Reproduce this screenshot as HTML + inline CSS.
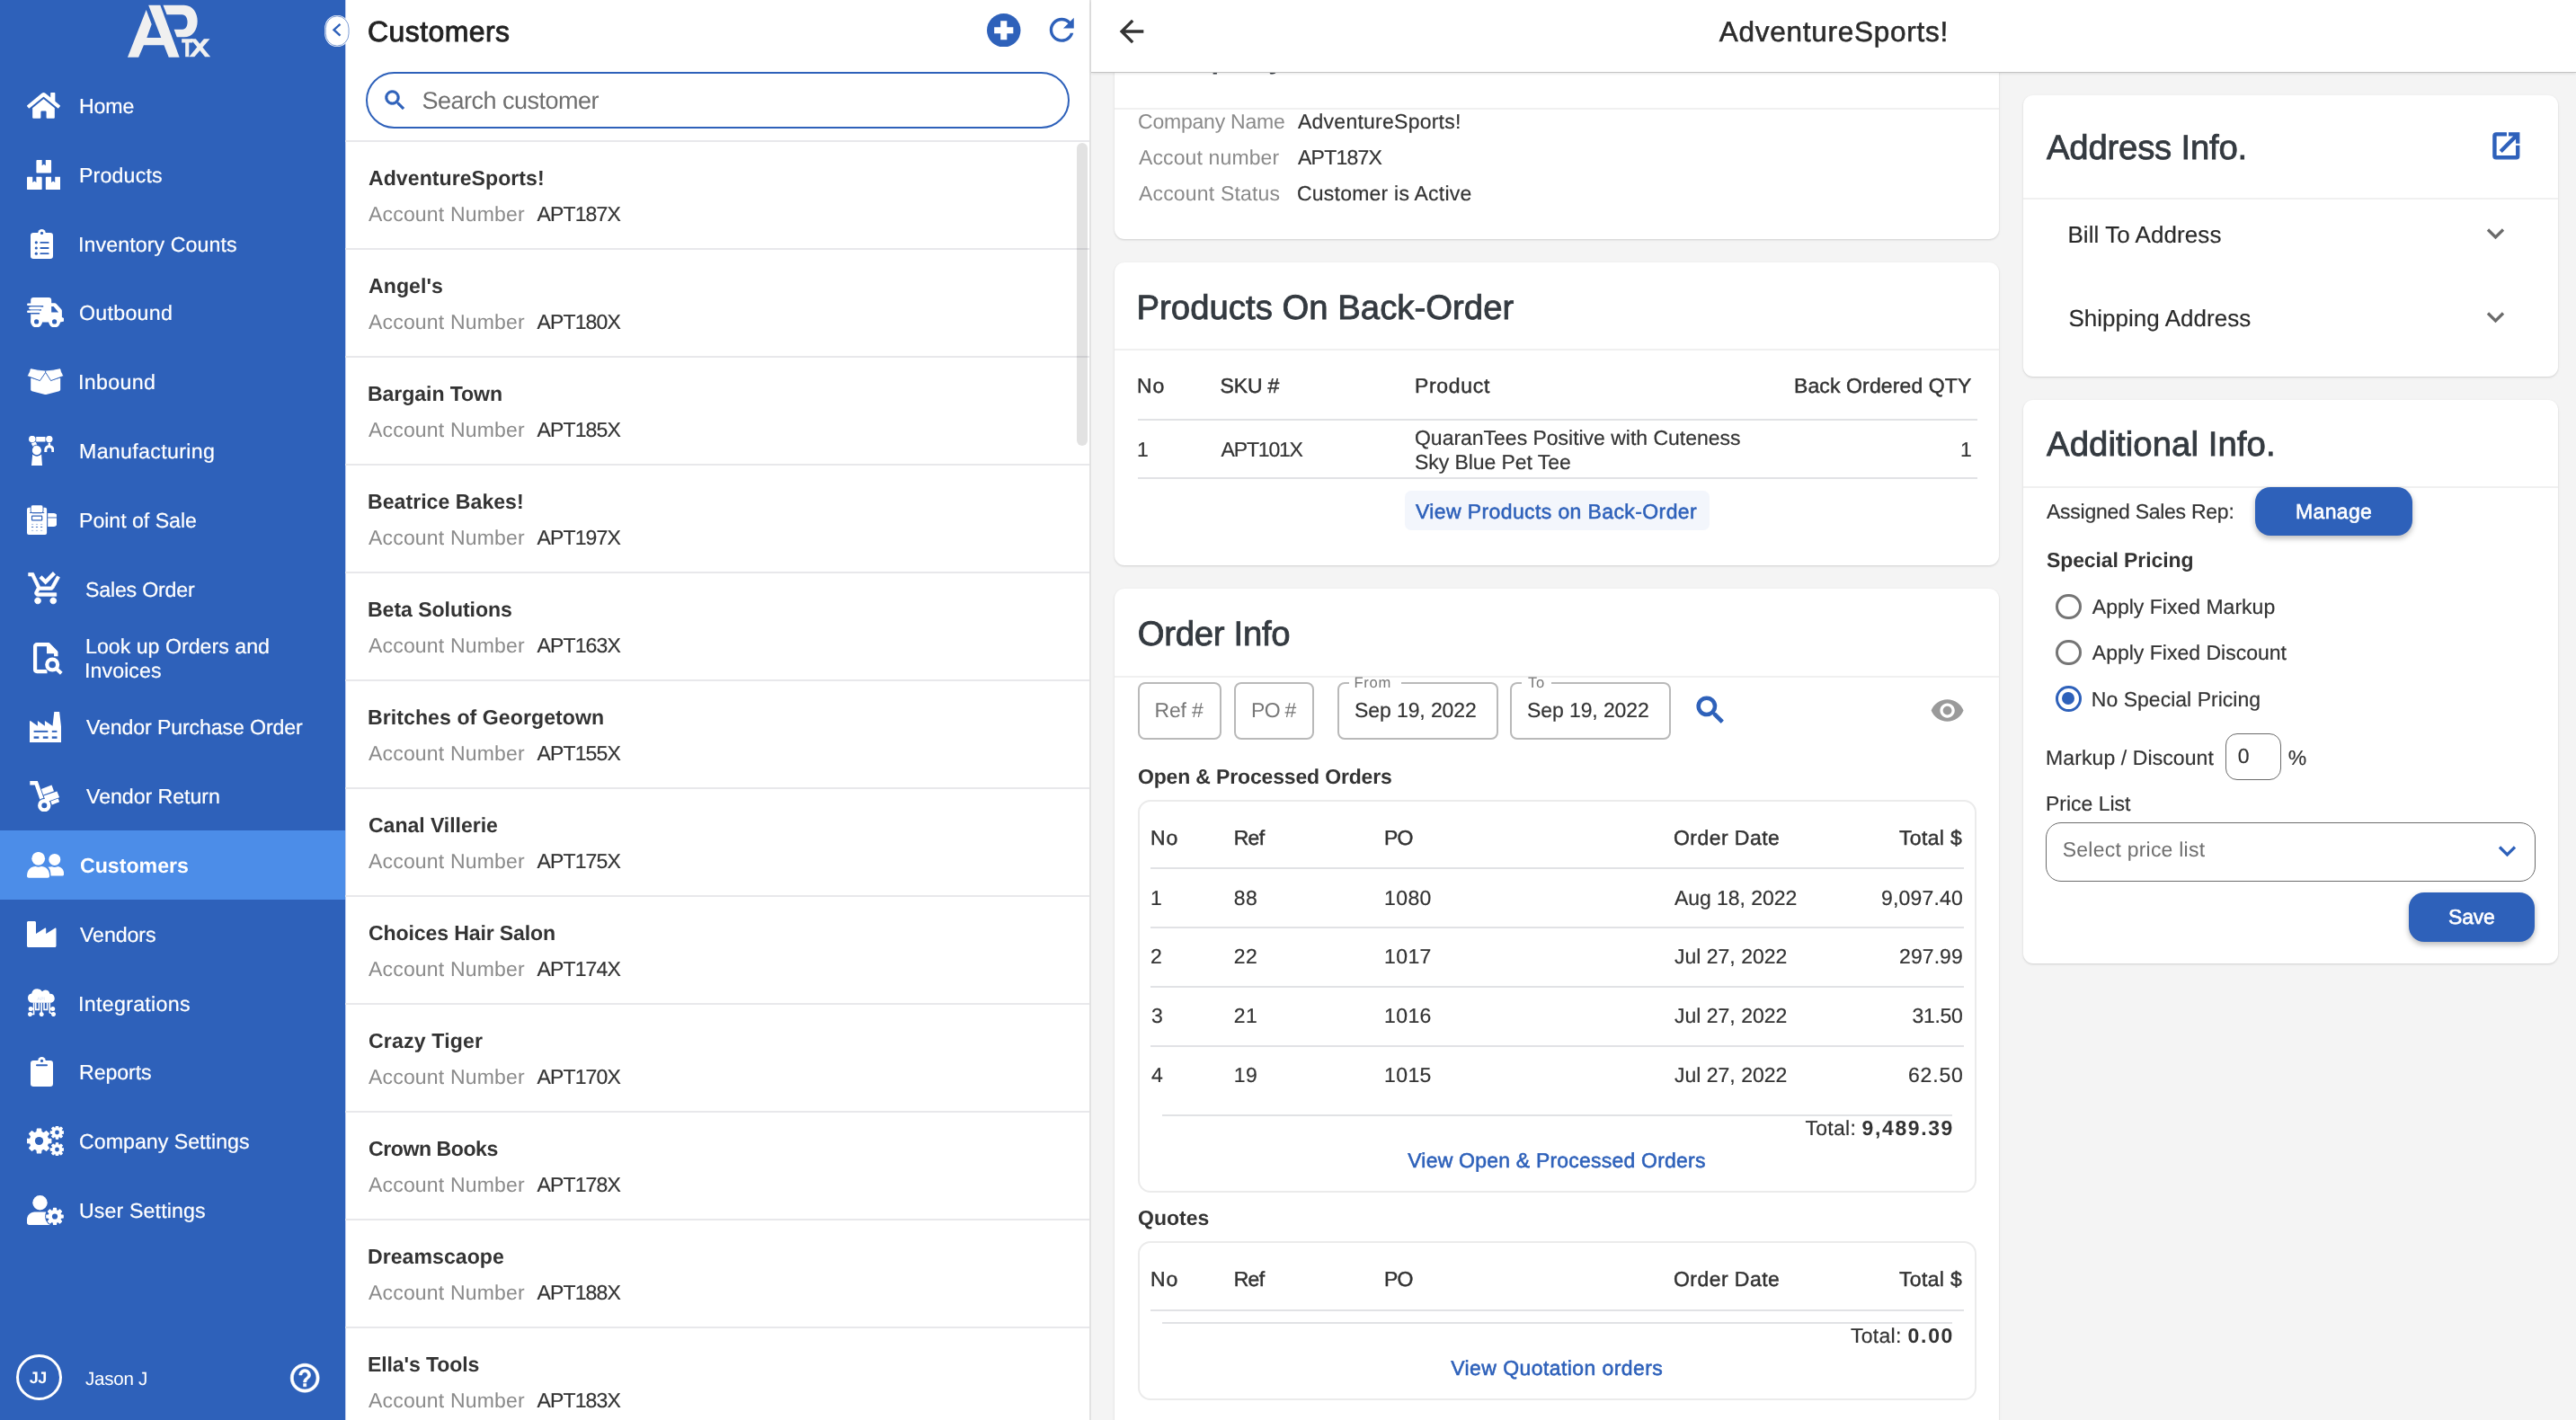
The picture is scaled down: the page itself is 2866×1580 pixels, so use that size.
<!DOCTYPE html>
<html lang="en"><head><meta charset="utf-8"><title>Customers - AdventureSports!</title>
<style>
html,body{margin:0;padding:0;}
body{width:2866px;height:1580px;position:relative;overflow:hidden;background:#fff;
font-family:"Liberation Sans",sans-serif;text-rendering:geometricPrecision;}
.b{position:absolute;box-sizing:border-box;display:block;}
.t{position:absolute;white-space:nowrap;display:block;}
</style></head>
<body>
<div class="b" style="left:0;top:0;width:2866px;height:1580px;will-change:transform;">
<div class="b" style="left:1213.00px;top:0.00px;width:1653.00px;height:1580.00px;background:#f4f4f4;"></div>
<div class="b" style="left:384.00px;top:0.00px;width:829.00px;height:1580.00px;background:#fff;"></div>
<div class="b" style="left:1212.00px;top:0.00px;width:2.00px;height:1580.00px;background:#e2e2e2;"></div>
<div class="b" style="left:384.00px;top:0.00px;width:1.00px;height:1580.00px;background:#c3cfec;"></div>
<div class="b" style="left:1240.00px;top:20.00px;width:984.00px;height:245.50px;background:#fff;border-radius:11px;box-shadow:0 1px 3px rgba(0,0,0,0.10),0 1px 2px rgba(0,0,0,0.06);"></div>
<span class="t" style="top:43.00px;font-size:38.30px;line-height:38.30px;color:#343a40;letter-spacing:0.215px;-webkit-text-stroke:0.85px #343a40;left:1266.00px;">Company Info.</span>
<div class="b" style="left:1240.00px;top:120.00px;width:984.00px;height:2.00px;background:#f0f0f0;"></div>
<span class="t" style="top:124.00px;font-size:23.00px;line-height:23.00px;color:#8a8a8a;letter-spacing:-0.218px;left:1266.00px;">Company Name</span>
<span class="t" style="top:124.00px;font-size:23.00px;line-height:23.00px;color:#333;letter-spacing:0.245px;-webkit-text-stroke:0.18px #333;left:1444.00px;">AdventureSports!</span>
<span class="t" style="top:164.00px;font-size:23.00px;line-height:23.00px;color:#8a8a8a;letter-spacing:0.121px;left:1267.00px;">Accout number</span>
<span class="t" style="top:164.00px;font-size:23.00px;line-height:23.00px;color:#333;letter-spacing:-0.769px;-webkit-text-stroke:0.18px #333;left:1444.00px;">APT187X</span>
<span class="t" style="top:204.00px;font-size:23.00px;line-height:23.00px;color:#8a8a8a;letter-spacing:0.177px;left:1267.00px;">Account Status</span>
<span class="t" style="top:204.00px;font-size:23.00px;line-height:23.00px;color:#333;letter-spacing:0.226px;-webkit-text-stroke:0.18px #333;left:1443.00px;">Customer is Active</span>
<div class="b" style="left:1240.00px;top:291.50px;width:984.00px;height:337.00px;background:#fff;border-radius:11px;box-shadow:0 1px 3px rgba(0,0,0,0.10),0 1px 2px rgba(0,0,0,0.06);"></div>
<span class="t" style="top:324.00px;font-size:38.30px;line-height:38.30px;color:#343a40;letter-spacing:0.022px;-webkit-text-stroke:0.85px #343a40;left:1264.50px;">Products On Back-Order</span>
<div class="b" style="left:1240.00px;top:387.50px;width:984.00px;height:2.00px;background:#f0f0f0;"></div>
<span class="t" style="top:418.00px;font-size:23.00px;line-height:23.00px;color:#333;letter-spacing:0.885px;-webkit-text-stroke:0.45px #333;left:1265.00px;">No</span>
<span class="t" style="top:418.00px;font-size:23.00px;line-height:23.00px;color:#333;letter-spacing:-0.173px;-webkit-text-stroke:0.45px #333;left:1357.60px;">SKU #</span>
<span class="t" style="top:418.00px;font-size:23.00px;line-height:23.00px;color:#333;letter-spacing:0.687px;-webkit-text-stroke:0.45px #333;left:1574.00px;">Product</span>
<span class="t" style="top:418.00px;font-size:23.00px;line-height:23.00px;color:#333;letter-spacing:0.118px;-webkit-text-stroke:0.45px #333;right:672.54px;">Back Ordered QTY</span>
<div class="b" style="left:1266.00px;top:465.50px;width:934.00px;height:2.00px;background:#e1e2e5;"></div>
<span class="t" style="top:489.00px;font-size:23.00px;line-height:23.00px;color:#333;-webkit-text-stroke:0.18px #333;left:1265.00px;">1</span>
<span class="t" style="top:489.00px;font-size:23.00px;line-height:23.00px;color:#333;letter-spacing:-1.185px;-webkit-text-stroke:0.18px #333;left:1358.60px;">APT101X</span>
<span class="t" style="top:476.00px;font-size:23.00px;line-height:23.00px;color:#333;letter-spacing:-0.018px;-webkit-text-stroke:0.18px #333;left:1574.00px;">QuaranTees Positive with Cuteness</span>
<span class="t" style="top:503.00px;font-size:23.00px;line-height:23.00px;color:#333;letter-spacing:-0.064px;-webkit-text-stroke:0.18px #333;left:1574.00px;">Sky Blue Pet Tee</span>
<span class="t" style="top:489.00px;font-size:23.00px;line-height:23.00px;color:#333;-webkit-text-stroke:0.18px #333;right:672.21px;">1</span>
<div class="b" style="left:1266.00px;top:531.00px;width:934.00px;height:2.00px;background:#e1e2e5;"></div>
<div class="b" style="left:1562.50px;top:546.00px;width:339.50px;height:43.70px;background:#f3f6fc;border-radius:7px;"></div>
<span class="t" style="top:558.00px;font-size:23.00px;line-height:23.00px;color:#2e61ba;letter-spacing:0.389px;-webkit-text-stroke:0.55px #2e61ba;left:1575.00px;">View Products on Back-Order</span>
<div class="b" style="left:1240.00px;top:654.50px;width:984.00px;height:1000.00px;background:#fff;border-radius:11px;box-shadow:0 1px 3px rgba(0,0,0,0.10),0 1px 2px rgba(0,0,0,0.06);"></div>
<span class="t" style="top:687.00px;font-size:38.30px;line-height:38.30px;color:#343a40;letter-spacing:-0.291px;-webkit-text-stroke:0.85px #343a40;left:1265.80px;">Order Info</span>
<div class="b" style="left:1240.00px;top:751.50px;width:984.00px;height:2.00px;background:#f0f0f0;"></div>
<div class="b" style="left:1266.00px;top:759.00px;width:93.30px;height:64.30px;border:2px solid #b9b9b9;border-radius:8px;background:#fff;"></div>
<span class="t" style="top:779.00px;font-size:23.00px;line-height:23.00px;color:#777;letter-spacing:-0.173px;left:1284.50px;">Ref #</span>
<div class="b" style="left:1373.00px;top:759.00px;width:88.80px;height:64.30px;border:2px solid #b9b9b9;border-radius:8px;background:#fff;"></div>
<span class="t" style="top:779.00px;font-size:23.00px;line-height:23.00px;color:#777;letter-spacing:-0.710px;left:1392.00px;">PO #</span>
<div class="b" style="left:1488.00px;top:759.00px;width:178.80px;height:64.30px;border:2px solid #b9b9b9;border-radius:8px;background:#fff;"></div>
<div class="b" style="left:1680.00px;top:759.00px;width:178.80px;height:64.30px;border:2px solid #b9b9b9;border-radius:8px;background:#fff;"></div>
<div class="b" style="left:1501.00px;top:756.00px;width:58.00px;height:8.00px;background:#fff;"></div>
<span class="t" style="top:752.00px;font-size:16.60px;line-height:16.60px;color:#777;letter-spacing:0.701px;left:1506.50px;">From</span>
<div class="b" style="left:1693.00px;top:756.00px;width:33.00px;height:8.00px;background:#fff;"></div>
<span class="t" style="top:752.00px;font-size:16.60px;line-height:16.60px;color:#777;letter-spacing:0.697px;left:1700.00px;">To</span>
<span class="t" style="top:779.00px;font-size:23.00px;line-height:23.00px;color:#333;letter-spacing:-0.096px;-webkit-text-stroke:0.18px #333;left:1507.00px;">Sep 19, 2022</span>
<span class="t" style="top:779.00px;font-size:23.00px;line-height:23.00px;color:#333;letter-spacing:-0.096px;-webkit-text-stroke:0.18px #333;left:1699.00px;">Sep 19, 2022</span>
<svg class="b" style="left:1882.50px;top:770.00px;" width="40.00" height="40.00" viewBox="0 0 24 24"><path fill="#2e61ba" stroke="#2e61ba" stroke-width="0.7" stroke-linejoin="round" d="M15.500 14h-.790l-.280-.270C15.410 12.590 16 11.110 16 9.500 16 5.910 13.090 3 9.500 3S3 5.910 3 9.500 5.910 16 9.500 16c1.610 0 3.090-.590 4.230-1.570l.270.280v.790l5 4.990L20.490 19l-4.990-5zm-6 0C7.010 14 5 11.990 5 9.500S7.010 5 9.500 5 14 7.010 14 9.500 11.990 14 9.500 14z"/></svg>
<svg class="b" style="left:2147.40px;top:770.60px;" width="39.20" height="39.20" viewBox="0 0 24 24"><path fill="#9a9a9a" d="M12 4.500C7 4.500 2.730 7.610 1 12c1.730 4.390 6 7.500 11 7.500s9.270-3.110 11-7.500c-1.730-4.390-6-7.500-11-7.500zM12 17c-2.760 0-5-2.240-5-5s2.240-5 5-5 5 2.240 5 5-2.240 5-5 5zm0-8c-1.660 0-3 1.340-3 3s1.340 3 3 3 3-1.340 3-3-1.340-3-3-3z"/></svg>
<span class="t" style="top:853.00px;font-size:23.00px;line-height:23.00px;color:#333;font-weight:700;letter-spacing:-0.161px;left:1266.00px;">Open &amp; Processed Orders</span>
<div class="b" style="left:1266.00px;top:889.50px;width:933.00px;height:437.80px;border:2px solid #ebebeb;border-radius:14px;background:#fff;"></div>
<span class="t" style="top:921.00px;font-size:23.00px;line-height:23.00px;color:#333;letter-spacing:0.885px;-webkit-text-stroke:0.45px #333;left:1280.00px;">No</span>
<span class="t" style="top:921.00px;font-size:23.00px;line-height:23.00px;color:#333;letter-spacing:-0.703px;-webkit-text-stroke:0.45px #333;left:1372.70px;">Ref</span>
<span class="t" style="top:921.00px;font-size:23.00px;line-height:23.00px;color:#333;letter-spacing:-0.844px;-webkit-text-stroke:0.45px #333;left:1540.00px;">PO</span>
<span class="t" style="top:921.00px;font-size:23.00px;line-height:23.00px;color:#333;letter-spacing:0.447px;-webkit-text-stroke:0.45px #333;left:1862.00px;">Order Date</span>
<span class="t" style="top:921.00px;font-size:23.00px;line-height:23.00px;color:#333;letter-spacing:0.338px;-webkit-text-stroke:0.45px #333;right:682.87px;">Total $</span>
<div class="b" style="left:1280.00px;top:965.20px;width:905.00px;height:2.00px;background:#e1e2e5;"></div>
<span class="t" style="top:988.00px;font-size:23.00px;line-height:23.00px;color:#333;-webkit-text-stroke:0.18px #333;left:1280.00px;">1</span>
<span class="t" style="top:988.00px;font-size:23.00px;line-height:23.00px;color:#333;letter-spacing:0.500px;-webkit-text-stroke:0.18px #333;left:1372.70px;">88</span>
<span class="t" style="top:988.00px;font-size:23.00px;line-height:23.00px;color:#333;letter-spacing:0.400px;-webkit-text-stroke:0.18px #333;left:1540.00px;">1080</span>
<span class="t" style="top:988.00px;font-size:23.00px;line-height:23.00px;color:#333;letter-spacing:-0.050px;-webkit-text-stroke:0.18px #333;left:1863.00px;">Aug 18, 2022</span>
<span class="t" style="top:988.00px;font-size:23.00px;line-height:23.00px;color:#333;letter-spacing:0.180px;-webkit-text-stroke:0.18px #333;right:682.03px;">9,097.40</span>
<div class="b" style="left:1280.00px;top:1031.00px;width:905.00px;height:2.00px;background:#e1e2e5;"></div>
<span class="t" style="top:1053.00px;font-size:23.00px;line-height:23.00px;color:#333;-webkit-text-stroke:0.18px #333;left:1280.00px;">2</span>
<span class="t" style="top:1053.00px;font-size:23.00px;line-height:23.00px;color:#333;letter-spacing:0.500px;-webkit-text-stroke:0.18px #333;left:1372.70px;">22</span>
<span class="t" style="top:1053.00px;font-size:23.00px;line-height:23.00px;color:#333;letter-spacing:0.400px;-webkit-text-stroke:0.18px #333;left:1540.00px;">1017</span>
<span class="t" style="top:1053.00px;font-size:23.00px;line-height:23.00px;color:#333;-webkit-text-stroke:0.18px #333;left:1863.00px;">Jul 27, 2022</span>
<span class="t" style="top:1053.00px;font-size:23.00px;line-height:23.00px;color:#333;letter-spacing:0.086px;-webkit-text-stroke:0.18px #333;right:682.12px;">297.99</span>
<div class="b" style="left:1280.00px;top:1096.80px;width:905.00px;height:2.00px;background:#e1e2e5;"></div>
<span class="t" style="top:1119.00px;font-size:23.00px;line-height:23.00px;color:#333;-webkit-text-stroke:0.18px #333;left:1281.00px;">3</span>
<span class="t" style="top:1119.00px;font-size:23.00px;line-height:23.00px;color:#333;letter-spacing:0.500px;-webkit-text-stroke:0.18px #333;left:1372.70px;">21</span>
<span class="t" style="top:1119.00px;font-size:23.00px;line-height:23.00px;color:#333;letter-spacing:0.400px;-webkit-text-stroke:0.18px #333;left:1540.00px;">1016</span>
<span class="t" style="top:1119.00px;font-size:23.00px;line-height:23.00px;color:#333;-webkit-text-stroke:0.18px #333;left:1863.00px;">Jul 27, 2022</span>
<span class="t" style="top:1119.00px;font-size:23.00px;line-height:23.00px;color:#333;letter-spacing:-0.318px;-webkit-text-stroke:0.18px #333;right:682.53px;">31.50</span>
<div class="b" style="left:1280.00px;top:1162.60px;width:905.00px;height:2.00px;background:#e1e2e5;"></div>
<span class="t" style="top:1185.00px;font-size:23.00px;line-height:23.00px;color:#333;-webkit-text-stroke:0.18px #333;left:1281.00px;">4</span>
<span class="t" style="top:1185.00px;font-size:23.00px;line-height:23.00px;color:#333;letter-spacing:0.500px;-webkit-text-stroke:0.18px #333;left:1372.70px;">19</span>
<span class="t" style="top:1185.00px;font-size:23.00px;line-height:23.00px;color:#333;letter-spacing:0.400px;-webkit-text-stroke:0.18px #333;left:1540.00px;">1015</span>
<span class="t" style="top:1185.00px;font-size:23.00px;line-height:23.00px;color:#333;-webkit-text-stroke:0.18px #333;left:1863.00px;">Jul 27, 2022</span>
<span class="t" style="top:1185.00px;font-size:23.00px;line-height:23.00px;color:#333;letter-spacing:0.807px;-webkit-text-stroke:0.18px #333;right:681.40px;">62.50</span>
<div class="b" style="left:1293.00px;top:1240.00px;width:879.00px;height:2.00px;background:#e1e2e5;"></div>
<span class="t" style="top:1244.00px;font-size:23.00px;line-height:23.00px;color:#333;letter-spacing:0.281px;-webkit-text-stroke:0.18px #333;right:800.83px;">Total:</span>
<span class="t" style="top:1244.00px;font-size:23.00px;line-height:23.00px;color:#333;font-weight:700;letter-spacing:1.609px;right:692.00px;">9,489.39</span>
<span class="t" style="top:1280.00px;font-size:23.00px;line-height:23.00px;color:#2e61ba;letter-spacing:0.209px;-webkit-text-stroke:0.55px #2e61ba;left:1731.90px;width:0;display:flex;justify-content:center;">View Open &amp; Processed Orders</span>
<span class="t" style="top:1344.00px;font-size:23.00px;line-height:23.00px;color:#333;font-weight:700;letter-spacing:0.011px;left:1266.00px;">Quotes</span>
<div class="b" style="left:1266.00px;top:1381.20px;width:933.00px;height:176.50px;border:2px solid #ebebeb;border-radius:14px;background:#fff;"></div>
<span class="t" style="top:1412.00px;font-size:23.00px;line-height:23.00px;color:#333;letter-spacing:0.885px;-webkit-text-stroke:0.45px #333;left:1280.00px;">No</span>
<span class="t" style="top:1412.00px;font-size:23.00px;line-height:23.00px;color:#333;letter-spacing:-0.703px;-webkit-text-stroke:0.45px #333;left:1372.70px;">Ref</span>
<span class="t" style="top:1412.00px;font-size:23.00px;line-height:23.00px;color:#333;letter-spacing:-0.844px;-webkit-text-stroke:0.45px #333;left:1540.00px;">PO</span>
<span class="t" style="top:1412.00px;font-size:23.00px;line-height:23.00px;color:#333;letter-spacing:0.447px;-webkit-text-stroke:0.45px #333;left:1862.00px;">Order Date</span>
<span class="t" style="top:1412.00px;font-size:23.00px;line-height:23.00px;color:#333;letter-spacing:0.338px;-webkit-text-stroke:0.45px #333;right:682.87px;">Total $</span>
<div class="b" style="left:1280.00px;top:1456.50px;width:905.00px;height:2.00px;background:#e1e2e5;"></div>
<div class="b" style="left:1293.00px;top:1470.50px;width:879.00px;height:2.00px;background:#e1e2e5;"></div>
<span class="t" style="top:1475.00px;font-size:23.00px;line-height:23.00px;color:#333;letter-spacing:0.281px;-webkit-text-stroke:0.18px #333;right:750.33px;">Total:</span>
<span class="t" style="top:1475.00px;font-size:23.00px;line-height:23.00px;color:#333;font-weight:700;letter-spacing:1.675px;right:691.93px;">0.00</span>
<span class="t" style="top:1511.00px;font-size:23.00px;line-height:23.00px;color:#2e61ba;letter-spacing:0.417px;-webkit-text-stroke:0.55px #2e61ba;left:1732.21px;width:0;display:flex;justify-content:center;">View Quotation orders</span>
<div class="b" style="left:2251.00px;top:105.50px;width:595.00px;height:313.00px;background:#fff;border-radius:11px;box-shadow:0 1px 3px rgba(0,0,0,0.10),0 1px 2px rgba(0,0,0,0.06);"></div>
<span class="t" style="top:146.00px;font-size:38.30px;line-height:38.30px;color:#343a40;letter-spacing:-0.210px;-webkit-text-stroke:0.85px #343a40;left:2277.00px;">Address Info.</span>
<svg class="b" style="left:2769.20px;top:143.20px;" width="38.70" height="38.70" viewBox="0 0 24 24"><path fill="#2e61ba" stroke="#2f60bb" stroke-width="0.7" d="M19 19H5V5h7V3H5c-1.110 0-2 .900-2 2v14c0 1.100.890 2 2 2h14c1.100 0 2-.900 2-2v-7h-2v7zM14 3v2h3.590l-9.830 9.830 1.410 1.410L19 6.410V10h2V3h-7z"/></svg>
<div class="b" style="left:2251.00px;top:219.50px;width:595.00px;height:2.00px;background:#f0f0f0;"></div>
<span class="t" style="top:248.00px;font-size:26.00px;line-height:26.00px;color:#2a2a2a;letter-spacing:0.067px;-webkit-text-stroke:0.18px #2a2a2a;left:2300.40px;">Bill To Address</span>
<span class="t" style="top:341.00px;font-size:26.00px;line-height:26.00px;color:#2a2a2a;letter-spacing:0.028px;-webkit-text-stroke:0.18px #2a2a2a;left:2301.40px;">Shipping Address</span>
<svg class="b" style="left:2765.50px;top:252.50px;" width="21.00" height="14.00" viewBox="0 0 21 14"><path d="M2 2.500l8.500 8.500 8.500-8.500" fill="none" stroke="#6b6b6b" stroke-width="3.300"/></svg>
<svg class="b" style="left:2765.50px;top:345.50px;" width="21.00" height="14.00" viewBox="0 0 21 14"><path d="M2 2.500l8.500 8.500 8.500-8.500" fill="none" stroke="#6b6b6b" stroke-width="3.300"/></svg>
<div class="b" style="left:2251.00px;top:444.70px;width:595.00px;height:627.50px;background:#fff;border-radius:11px;box-shadow:0 1px 3px rgba(0,0,0,0.10),0 1px 2px rgba(0,0,0,0.06);"></div>
<span class="t" style="top:476.00px;font-size:38.30px;line-height:38.30px;color:#343a40;letter-spacing:0.084px;-webkit-text-stroke:0.85px #343a40;left:2277.00px;">Additional Info.</span>
<div class="b" style="left:2251.00px;top:540.50px;width:595.00px;height:2.00px;background:#f0f0f0;"></div>
<span class="t" style="top:558.00px;font-size:23.00px;line-height:23.00px;color:#333;letter-spacing:-0.263px;-webkit-text-stroke:0.18px #333;left:2277.00px;">Assigned Sales Rep:</span>
<div class="b" style="left:2509.00px;top:542.40px;width:175.30px;height:53.60px;background:#2e61ba;border-radius:17px;box-shadow:0 3px 6px rgba(0,0,0,0.28);"></div>
<span class="t" style="top:558.00px;font-size:23.00px;line-height:23.00px;color:#fff;letter-spacing:0.333px;-webkit-text-stroke:0.60px #fff;left:2596.67px;width:0;display:flex;justify-content:center;">Manage</span>
<span class="t" style="top:612.00px;font-size:23.00px;line-height:23.00px;color:#333;font-weight:700;letter-spacing:-0.104px;left:2277.00px;">Special Pricing</span>
<div class="b" style="left:2287.00px;top:660.60px;width:28.80px;height:28.80px;border:3px solid #757575;border-radius:50%;background:#fff;"></div>
<span class="t" style="top:664.00px;font-size:23.00px;line-height:23.00px;color:#333;letter-spacing:0.008px;-webkit-text-stroke:0.18px #333;left:2327.80px;">Apply Fixed Markup</span>
<div class="b" style="left:2287.00px;top:711.70px;width:28.80px;height:28.80px;border:3px solid #757575;border-radius:50%;background:#fff;"></div>
<span class="t" style="top:715.00px;font-size:23.00px;line-height:23.00px;color:#333;letter-spacing:0.008px;-webkit-text-stroke:0.18px #333;left:2327.80px;">Apply Fixed Discount</span>
<div class="b" style="left:2287.00px;top:762.80px;width:28.80px;height:28.80px;border:3px solid #2e61ba;border-radius:50%;background:#fff;"></div>
<div class="b" style="left:2294.40px;top:770.20px;width:14.00px;height:14.00px;background:#2e61ba;border-radius:50%;"></div>
<span class="t" style="top:767.00px;font-size:23.00px;line-height:23.00px;color:#333;letter-spacing:0.022px;-webkit-text-stroke:0.18px #333;left:2326.80px;">No Special Pricing</span>
<span class="t" style="top:832.00px;font-size:23.00px;line-height:23.00px;color:#333;letter-spacing:0.096px;-webkit-text-stroke:0.18px #333;left:2276.00px;">Markup / Discount</span>
<div class="b" style="left:2476.00px;top:816.00px;width:62.00px;height:52.00px;border:1.600px solid #6b6b6b;border-radius:13px;background:#fff;"></div>
<span class="t" style="top:830.00px;font-size:23.00px;line-height:23.00px;color:#333;-webkit-text-stroke:0.18px #333;left:2489.70px;">0</span>
<span class="t" style="top:832.00px;font-size:23.00px;line-height:23.00px;color:#333;letter-spacing:-1.002px;-webkit-text-stroke:0.18px #333;left:2545.70px;">%</span>
<span class="t" style="top:883.00px;font-size:23.00px;line-height:23.00px;color:#333;letter-spacing:-0.023px;-webkit-text-stroke:0.18px #333;left:2276.00px;">Price List</span>
<div class="b" style="left:2276.00px;top:915.00px;width:545.00px;height:65.50px;border:1.600px solid #6b6b6b;border-radius:17px;background:#fff;"></div>
<span class="t" style="top:934.00px;font-size:23.00px;line-height:23.00px;color:#6f6f6f;letter-spacing:0.232px;left:2294.70px;">Select price list</span>
<svg class="b" style="left:2778.50px;top:940.00px;" width="21.00" height="14.00" viewBox="0 0 21 14"><path d="M2 2.500l8.500 8.500 8.500-8.500" fill="none" stroke="#2e61ba" stroke-width="3.300"/></svg>
<div class="b" style="left:2680.00px;top:993.00px;width:140.00px;height:54.70px;background:#2e61ba;border-radius:17px;box-shadow:0 3px 6px rgba(0,0,0,0.28);"></div>
<span class="t" style="top:1009.00px;font-size:23.00px;line-height:23.00px;color:#fff;letter-spacing:-0.215px;-webkit-text-stroke:0.60px #fff;left:2749.89px;width:0;display:flex;justify-content:center;">Save</span>
<div class="b" style="left:1214.00px;top:0.00px;width:1652.00px;height:80.00px;background:#fff;box-shadow:0 1px 0 #c4c4c4, 0 2px 3px rgba(0,0,0,0.10);"></div>
<svg class="b" style="left:1239.00px;top:14.70px;" width="40.00" height="40.00" viewBox="0 0 24 24"><path fill="#333" d="M20 11H7.830l5.590-5.590L12 4l-8 8 8 8 1.410-1.410L7.830 13H20v-2z"/></svg>
<span class="t" style="top:20.00px;font-size:31.50px;line-height:31.50px;color:#2b2b2b;letter-spacing:0.757px;-webkit-text-stroke:0.55px #2b2b2b;left:2040.38px;width:0;display:flex;justify-content:center;">AdventureSports!</span>
<span class="t" style="top:19.00px;font-size:32.00px;line-height:32.00px;color:#222;letter-spacing:0.412px;-webkit-text-stroke:0.90px #222;left:409.00px;">Customers</span>
<svg class="b" style="left:1098.00px;top:14.50px;" width="37.50" height="37.50" viewBox="0 0 40 40"><circle cx="20" cy="20" r="20" fill="#2e61ba"/><path d="M20 8.700v22.600M8.700 20h22.600" stroke="#fff" stroke-width="7.600" stroke-linecap="butt"/></svg>
<svg class="b" style="left:1160.50px;top:13.30px;" width="40.50" height="40.50" viewBox="0 0 24 24"><path fill="#2e61ba" d="M17.650 6.350C16.200 4.900 14.210 4 12 4c-4.420 0-7.990 3.580-7.990 8s3.570 8 7.990 8c3.730 0 6.840-2.550 7.730-6h-2.080c-.820 2.330-3.040 4-5.650 4-3.310 0-6-2.690-6-6s2.690-6 6-6c1.660 0 3.140.690 4.220 1.780L13 11h7V4l-2.350 2.350z"/></svg>
<div class="b" style="left:406.60px;top:80.00px;width:783.60px;height:63.20px;border:2.5px solid #2e61ba;border-radius:32px;background:#fff;"></div>
<svg class="b" style="left:424.50px;top:96.50px;" width="29.00" height="29.00" viewBox="0 0 24 24"><path fill="#2e61ba" stroke="#2e61ba" stroke-width="0.6" stroke-linejoin="round" d="M15.500 14h-.790l-.280-.270C15.410 12.590 16 11.110 16 9.500 16 5.910 13.090 3 9.500 3S3 5.910 3 9.500 5.910 16 9.500 16c1.610 0 3.090-.590 4.230-1.570l.270.280v.790l5 4.990L20.490 19l-4.990-5zm-6 0C7.010 14 5 11.990 5 9.500S7.010 5 9.500 5 14 7.010 14 9.500 11.990 14 9.500 14z"/></svg>
<span class="t" style="top:99.00px;font-size:27.00px;line-height:27.00px;color:#6f6f6f;letter-spacing:-0.507px;left:469.50px;">Search customer</span>
<div class="b" style="left:384.00px;top:156.40px;width:828.00px;height:1.70px;background:#e8e8eb;"></div>
<span class="t" style="top:187.00px;font-size:23.10px;line-height:23.10px;color:#333;font-weight:700;letter-spacing:0.043px;left:410.00px;">AdventureSports!</span>
<span class="t" style="top:227.00px;font-size:23.00px;line-height:23.00px;color:#8a8a8a;letter-spacing:0.181px;left:410.00px;">Account Number</span>
<span class="t" style="top:227.00px;font-size:23.00px;line-height:23.00px;color:#333;letter-spacing:-0.852px;-webkit-text-stroke:0.18px #333;left:597.50px;">APT187X</span>
<div class="b" style="left:384.00px;top:276.30px;width:828.00px;height:1.70px;background:#e8e8eb;"></div>
<span class="t" style="top:307.00px;font-size:23.10px;line-height:23.10px;color:#333;font-weight:700;letter-spacing:0.057px;left:410.00px;">Angel&#x27;s</span>
<span class="t" style="top:347.00px;font-size:23.00px;line-height:23.00px;color:#8a8a8a;letter-spacing:0.181px;left:410.00px;">Account Number</span>
<span class="t" style="top:347.00px;font-size:23.00px;line-height:23.00px;color:#333;letter-spacing:-0.852px;-webkit-text-stroke:0.18px #333;left:597.50px;">APT180X</span>
<div class="b" style="left:384.00px;top:396.30px;width:828.00px;height:1.70px;background:#e8e8eb;"></div>
<span class="t" style="top:427.00px;font-size:23.10px;line-height:23.10px;color:#333;font-weight:700;letter-spacing:-0.078px;left:409.00px;">Bargain Town</span>
<span class="t" style="top:467.00px;font-size:23.00px;line-height:23.00px;color:#8a8a8a;letter-spacing:0.181px;left:410.00px;">Account Number</span>
<span class="t" style="top:467.00px;font-size:23.00px;line-height:23.00px;color:#333;letter-spacing:-0.852px;-webkit-text-stroke:0.18px #333;left:597.50px;">APT185X</span>
<div class="b" style="left:384.00px;top:516.30px;width:828.00px;height:1.70px;background:#e8e8eb;"></div>
<span class="t" style="top:547.00px;font-size:23.10px;line-height:23.10px;color:#333;font-weight:700;letter-spacing:0.027px;left:409.00px;">Beatrice Bakes!</span>
<span class="t" style="top:587.00px;font-size:23.00px;line-height:23.00px;color:#8a8a8a;letter-spacing:0.181px;left:410.00px;">Account Number</span>
<span class="t" style="top:587.00px;font-size:23.00px;line-height:23.00px;color:#333;letter-spacing:-0.852px;-webkit-text-stroke:0.18px #333;left:597.50px;">APT197X</span>
<div class="b" style="left:384.00px;top:636.30px;width:828.00px;height:1.70px;background:#e8e8eb;"></div>
<span class="t" style="top:667.00px;font-size:23.10px;line-height:23.10px;color:#333;font-weight:700;letter-spacing:-0.064px;left:409.00px;">Beta Solutions</span>
<span class="t" style="top:707.00px;font-size:23.00px;line-height:23.00px;color:#8a8a8a;letter-spacing:0.181px;left:410.00px;">Account Number</span>
<span class="t" style="top:707.00px;font-size:23.00px;line-height:23.00px;color:#333;letter-spacing:-0.852px;-webkit-text-stroke:0.18px #333;left:597.50px;">APT163X</span>
<div class="b" style="left:384.00px;top:756.30px;width:828.00px;height:1.70px;background:#e8e8eb;"></div>
<span class="t" style="top:787.00px;font-size:23.10px;line-height:23.10px;color:#333;font-weight:700;letter-spacing:0.064px;left:409.00px;">Britches of Georgetown</span>
<span class="t" style="top:827.00px;font-size:23.00px;line-height:23.00px;color:#8a8a8a;letter-spacing:0.181px;left:410.00px;">Account Number</span>
<span class="t" style="top:827.00px;font-size:23.00px;line-height:23.00px;color:#333;letter-spacing:-0.852px;-webkit-text-stroke:0.18px #333;left:597.50px;">APT155X</span>
<div class="b" style="left:384.00px;top:876.30px;width:828.00px;height:1.70px;background:#e8e8eb;"></div>
<span class="t" style="top:907.00px;font-size:23.10px;line-height:23.10px;color:#333;font-weight:700;letter-spacing:-0.061px;left:410.00px;">Canal Villerie</span>
<span class="t" style="top:947.00px;font-size:23.00px;line-height:23.00px;color:#8a8a8a;letter-spacing:0.181px;left:410.00px;">Account Number</span>
<span class="t" style="top:947.00px;font-size:23.00px;line-height:23.00px;color:#333;letter-spacing:-0.852px;-webkit-text-stroke:0.18px #333;left:597.50px;">APT175X</span>
<div class="b" style="left:384.00px;top:996.30px;width:828.00px;height:1.70px;background:#e8e8eb;"></div>
<span class="t" style="top:1027.00px;font-size:23.10px;line-height:23.10px;color:#333;font-weight:700;letter-spacing:-0.140px;left:410.00px;">Choices Hair Salon</span>
<span class="t" style="top:1067.00px;font-size:23.00px;line-height:23.00px;color:#8a8a8a;letter-spacing:0.181px;left:410.00px;">Account Number</span>
<span class="t" style="top:1067.00px;font-size:23.00px;line-height:23.00px;color:#333;letter-spacing:-0.852px;-webkit-text-stroke:0.18px #333;left:597.50px;">APT174X</span>
<div class="b" style="left:384.00px;top:1116.30px;width:828.00px;height:1.70px;background:#e8e8eb;"></div>
<span class="t" style="top:1147.00px;font-size:23.10px;line-height:23.10px;color:#333;font-weight:700;letter-spacing:0.163px;left:410.00px;">Crazy Tiger</span>
<span class="t" style="top:1187.00px;font-size:23.00px;line-height:23.00px;color:#8a8a8a;letter-spacing:0.181px;left:410.00px;">Account Number</span>
<span class="t" style="top:1187.00px;font-size:23.00px;line-height:23.00px;color:#333;letter-spacing:-0.852px;-webkit-text-stroke:0.18px #333;left:597.50px;">APT170X</span>
<div class="b" style="left:384.00px;top:1236.30px;width:828.00px;height:1.70px;background:#e8e8eb;"></div>
<span class="t" style="top:1267.00px;font-size:23.10px;line-height:23.10px;color:#333;font-weight:700;letter-spacing:-0.450px;left:410.00px;">Crown Books</span>
<span class="t" style="top:1307.00px;font-size:23.00px;line-height:23.00px;color:#8a8a8a;letter-spacing:0.181px;left:410.00px;">Account Number</span>
<span class="t" style="top:1307.00px;font-size:23.00px;line-height:23.00px;color:#333;letter-spacing:-0.852px;-webkit-text-stroke:0.18px #333;left:597.50px;">APT178X</span>
<div class="b" style="left:384.00px;top:1356.30px;width:828.00px;height:1.70px;background:#e8e8eb;"></div>
<span class="t" style="top:1387.00px;font-size:23.10px;line-height:23.10px;color:#333;font-weight:700;letter-spacing:0.036px;left:409.00px;">Dreamscaope</span>
<span class="t" style="top:1427.00px;font-size:23.00px;line-height:23.00px;color:#8a8a8a;letter-spacing:0.181px;left:410.00px;">Account Number</span>
<span class="t" style="top:1427.00px;font-size:23.00px;line-height:23.00px;color:#333;letter-spacing:-0.852px;-webkit-text-stroke:0.18px #333;left:597.50px;">APT188X</span>
<div class="b" style="left:384.00px;top:1476.30px;width:828.00px;height:1.70px;background:#e8e8eb;"></div>
<span class="t" style="top:1507.00px;font-size:23.10px;line-height:23.10px;color:#333;font-weight:700;letter-spacing:-0.124px;left:409.00px;">Ella&#x27;s Tools</span>
<span class="t" style="top:1547.00px;font-size:23.00px;line-height:23.00px;color:#8a8a8a;letter-spacing:0.181px;left:410.00px;">Account Number</span>
<span class="t" style="top:1547.00px;font-size:23.00px;line-height:23.00px;color:#333;letter-spacing:-0.852px;-webkit-text-stroke:0.18px #333;left:597.50px;">APT183X</span>
<div class="b" style="left:1197.50px;top:159.00px;width:12.00px;height:337.00px;background:rgba(0,0,0,0.115);border-radius:6px;"></div>
<div class="b" style="left:0.00px;top:0.00px;width:384.00px;height:1580.00px;background:#2e61ba;"></div>
<div class="b" style="left:0.00px;top:924.00px;width:384.00px;height:77.00px;background:#4c8de8;"></div>
<svg class="b" style="left:100.00px;top:0.00px;" width="322.00" height="178.00" viewBox="0 0 2569 1420"><g fill="#f0f0f0"><path d="M500 88L548 215 505 335H640L662 400H478L432 508H335z"/><path d="M520 45H625L795 508H700z"/><path d="M650 45H835C995 45 995 330 835 330H772L747 262H822C882 262 882 130 818 130H683z"/><path d="M815 345H912V378H880V505H847V378H815z"/><path d="M893 345H940L1070 505H1022z"/><path d="M1012 345H1065L928 505H880z"/></g><rect x="2084" y="135" width="222" height="280" rx="108" ry="118" fill="#fff"/><rect x="2092" y="143" width="206" height="264" rx="100" ry="110" fill="#fff" stroke="#2e61ba" stroke-width="5"/><path d="M2222 214L2166 265 2222 316" fill="none" stroke="#2e61ba" stroke-width="19"/></svg>
<svg class="b" style="left:30.00px;top:101.00px;" width="37.00" height="32.90" viewBox="0 0 576 512"><path fill="#fff" d="M280.37 148.26L96 300.11V464a16 16 0 0 0 16 16l112.06-.29a16 16 0 0 0 15.92-16V368a16 16 0 0 1 16-16h64a16 16 0 0 1 16 16v95.64a16 16 0 0 0 16 16.05L464 480a16 16 0 0 0 16-16V300L295.67 148.26a12.19 12.19 0 0 0-15.3 0zM571.6 251.47L488 182.56V44.05a12 12 0 0 0-12-12h-56a12 12 0 0 0-12 12v72.61L318.47 43a48 48 0 0 0-61 0L4.34 251.47a12 12 0 0 0-1.6 16.9l25.5 31A12 12 0 0 0 45.15 301l235.22-193.74a12.19 12.19 0 0 1 15.3 0L530.9 301a12 12 0 0 0 16.9-1.6l25.5-31a12 12 0 0 0-1.7-16.93z"/></svg>
<span class="t" style="top:107.00px;font-size:23.20px;line-height:23.20px;color:#fff;letter-spacing:-0.155px;-webkit-text-stroke:0.20px #fff;left:88.00px;">Home</span>
<svg class="b" style="left:29.60px;top:177.70px;" width="37.50" height="33.30" viewBox="0 0 576 512"><path fill="#fff" d="M560 288h-80v96l-32-21.3-32 21.3v-96h-80c-8.8 0-16 7.2-16 16v192c0 8.8 7.2 16 16 16h224c8.800 0 16-7.2 16-16V304c0-8.8-7.2-16-16-16zm-384-64h224c8.800 0 16-7.2 16-16V16c0-8.8-7.2-16-16-16h-80v96l-32-21.3L256 96V0h-80c-8.800 0-16 7.200-16 16v192c0 8.800 7.200 16 16 16zm64 64h-80v96l-32-21.3L96 384v-96H16c-8.800 0-16 7.200-16 16v192c0 8.800 7.200 16 16 16h224c8.800 0 16-7.200 16-16V304c0-8.800-7.200-16-16-16z"/></svg>
<span class="t" style="top:184.00px;font-size:23.20px;line-height:23.20px;color:#fff;letter-spacing:0.154px;-webkit-text-stroke:0.20px #fff;left:88.00px;">Products</span>
<svg class="b" style="left:33.80px;top:255.30px;" width="25.00" height="33.00" viewBox="0 0 25 33"><rect x="0" y="4" width="25" height="29" rx="3.2" fill="#fff"/><circle cx="12.5" cy="4.3" r="4.3" fill="#fff"/><circle cx="12.5" cy="4.4" r="1.6" fill="#2e61ba"/><circle cx="6.3" cy="14.8" r="1.6" fill="#2e61ba"/><rect x="10.4" y="13.9" width="10.2" height="1.9" rx="0.9" fill="#2e61ba"/><circle cx="6.3" cy="21.0" r="1.6" fill="#2e61ba"/><rect x="10.4" y="20.1" width="10.2" height="1.9" rx="0.9" fill="#2e61ba"/><circle cx="6.3" cy="27.2" r="1.6" fill="#2e61ba"/><rect x="10.4" y="26.2" width="10.2" height="1.9" rx="0.9" fill="#2e61ba"/></svg>
<span class="t" style="top:261.00px;font-size:23.20px;line-height:23.20px;color:#fff;letter-spacing:0.086px;-webkit-text-stroke:0.20px #fff;left:87.00px;">Inventory Counts</span>
<svg class="b" style="left:29.90px;top:330.90px;" width="41.30" height="33.40" viewBox="0 0 41.3 33.4"><path d="M4.200 3a3 3 0 0 1 3-3h17a3 3 0 0 1 3 3V27.500H4.200z" fill="#fff"/><rect x="0" y="5" width="4.200" height="1.300" fill="#2e61ba" opacity="0"/><rect x="2.100" y="9.100" width="16.100" height="1.500" fill="#2e61ba"/><rect x="0" y="13.200" width="16" height="1.400" fill="#2e61ba"/><rect x="4.200" y="17" width="9.900" height="1.500" fill="#2e61ba"/><rect x="0" y="6.400" width="18.200" height="2.700" rx="1.300" fill="#fff"/><rect x="2.100" y="10.600" width="13.900" height="2.600" rx="1.300" fill="#fff"/><rect x="0" y="14.600" width="14.100" height="2.400" rx="1.200" fill="#fff"/><path d="M26.500 6.300H31c.6 0 1.200.3 1.600.7l5.700 6.200c.4.400.6 1 .6 1.500V22l1.700.7c.4.200.6.500.6.900v2.300c0 .500-.400.900-.900.900l-3.100.700H26.500z" fill="#fff"/><path d="M27.200 10.100h2.400l5.500 6.400h-7.900z" fill="#2e61ba"/><circle cx="10.6" cy="26.900" r="6.500" fill="#fff"/><circle cx="10.6" cy="26.900" r="2.600" fill="#2e61ba"/><circle cx="30.6" cy="26.900" r="6.500" fill="#fff"/><circle cx="30.6" cy="26.900" r="2.600" fill="#2e61ba"/></svg>
<span class="t" style="top:337.00px;font-size:23.20px;line-height:23.20px;color:#fff;letter-spacing:0.291px;-webkit-text-stroke:0.20px #fff;left:88.00px;">Outbound</span>
<svg class="b" style="left:29.90px;top:409.90px;" width="41.00" height="29.20" viewBox="0 0 41 29.2"><path d="M4.200 10.500L14.400 13.600 20.700 4.400 26.600 13.600 37.200 10.500V23.300c0 .9-.5 1.600-1.300 1.900L20.700 29.200 5.500 25.200c-.8-.3-1.300-1-1.300-1.900z" fill="#fff"/><path d="M4.200 0.300Q12 2.300 20.700 2.200V4.400L14.400 13.600 0.200 8.400z" fill="#fff" stroke="#2e61ba" stroke-width="0.900" stroke-linejoin="round"/><path d="M36.800 0.300Q29.400 2.300 20.700 2.200V4.400L26.600 13.600 40.800 8.400z" fill="#fff" stroke="#2e61ba" stroke-width="0.900" stroke-linejoin="round"/><path d="M4.200 0.300Q12 2.300 20.700 2.200Q29.400 2.300 36.800 0.300L38 2.500H3z" fill="#fff"/></svg>
<span class="t" style="top:414.00px;font-size:23.20px;line-height:23.20px;color:#fff;letter-spacing:0.345px;-webkit-text-stroke:0.20px #fff;left:87.00px;">Inbound</span>
<svg class="b" style="left:32.00px;top:484.90px;" width="28.30" height="33.00" viewBox="0 0 28.3 33"><circle cx="3.800" cy="3.600" r="3.800" fill="#fff"/><rect x="8.200" y="1.100" width="10.300" height="5.400" rx="0.500" fill="#fff"/><circle cx="22.800" cy="3.600" r="3.700" fill="#fff"/><path d="M2.800 8.600l4.800-2 2 3.600-4.600 2.300z" fill="#fff"/><circle cx="8.900" cy="16.100" r="5.100" fill="#fff"/><path d="M4.200 20.500Q8.900 24.500 14.100 20.500L15 33H3z" fill="#fff"/><circle cx="8.900" cy="16.100" r="6" fill="none" stroke="#2e61ba" stroke-width="0.900"/><rect x="21.600" y="7.600" width="2.500" height="4.200" fill="#fff"/><path d="M18.800 18V15.300c0-2.200 1.800-3.600 4-3.600s4 1.400 4 3.600V18" fill="none" stroke="#fff" stroke-width="3" stroke-linejoin="round"/></svg>
<span class="t" style="top:491.00px;font-size:23.20px;line-height:23.20px;color:#fff;letter-spacing:0.330px;-webkit-text-stroke:0.20px #fff;left:88.00px;">Manufacturing</span>
<svg class="b" style="left:29.90px;top:562.10px;" width="33.40" height="33.00" viewBox="0 0 33.4 33"><rect x="0" y="2.800" width="22.100" height="30.200" rx="2" fill="#fff"/><rect x="4.200" y="-0.200" width="13.800" height="9" rx="2.200" fill="#fff" stroke="#2e61ba" stroke-width="0.900"/><rect x="3" y="8.100" width="16.200" height="0.900" fill="#2e61ba"/><rect x="5.500" y="12.200" width="11.200" height="4.700" rx="0.500" fill="#fff" stroke="#2e61ba" stroke-width="1.200"/><rect x="5.0" y="20.9" width="2.200" height="0.900" fill="#2e61ba" opacity="0.45"/><rect x="9.9" y="20.9" width="2.200" height="0.900" fill="#2e61ba" opacity="0.45"/><rect x="15.0" y="20.9" width="2.200" height="0.900" fill="#2e61ba" opacity="0.45"/><rect x="5.0" y="23.9" width="2.200" height="0.900" fill="#2e61ba" opacity="1"/><rect x="9.9" y="23.9" width="2.200" height="0.900" fill="#2e61ba" opacity="1"/><rect x="15.0" y="23.9" width="2.200" height="0.900" fill="#2e61ba" opacity="1"/><rect x="5.0" y="27.9" width="2.200" height="0.900" fill="#2e61ba" opacity="0.45"/><rect x="9.9" y="27.9" width="2.200" height="0.900" fill="#2e61ba" opacity="0.45"/><rect x="15.0" y="27.9" width="2.200" height="0.900" fill="#2e61ba" opacity="0.45"/><path d="M23.200 8.900h6.700a3.500 3.500 0 0 1 3.500 3.500v8a3.500 3.500 0 0 1-3.500 3.500h-6.700z" fill="#fff"/><rect x="23.200" y="13.500" width="10.200" height="0.900" fill="#2e61ba"/></svg>
<span class="t" style="top:568.00px;font-size:23.20px;line-height:23.20px;color:#fff;letter-spacing:-0.049px;-webkit-text-stroke:0.20px #fff;left:88.00px;">Point of Sale</span>
<svg class="b" style="left:30.00px;top:634.00px;" width="41.30" height="41.30" viewBox="0 0 24 24"><path fill="#fff" stroke="#fff" stroke-width="0.45" d="M7 18c-1.100 0-1.990.900-1.990 2S5.900 22 7 22s2-.900 2-2-.900-2-2-2zm10 0c-1.100 0-1.990.900-1.990 2s.890 2 1.990 2 2-.900 2-2-.900-2-2-2zm-9.830-3.250l.030-.120.900-1.630h7.450c.750 0 1.410-.410 1.750-1.030l3.860-7.010L19.420 4h-.010l-1.100 2-2.760 5H8.530l-.130-.270L6.160 6l-.950-2-.940-2H1v2h2l3.600 7.590-1.350 2.450c-.160.280-.250.610-.250.960 0 1.100.900 2 2 2h12v-2H7.420c-.130 0-.250-.110-.250-.250z"/><path d="M8.700 4.500l3.300 3.300 5.700-5.700" fill="none" stroke="#fff" stroke-width="2.500"/></svg>
<span class="t" style="top:645.00px;font-size:23.20px;line-height:23.20px;color:#fff;letter-spacing:-0.200px;-webkit-text-stroke:0.20px #fff;left:95.00px;">Sales Order</span>
<svg class="b" style="left:36.85px;top:714.70px;" width="33.20" height="36.40" viewBox="0 0 33.2 36.4"><path d="M25.200 15.200V10.800L16.800 2.100H4.100a2 2 0 0 0-2 2V30.100a2 2 0 0 0 2 2H15.500" fill="none" stroke="#fff" stroke-width="4.200" stroke-linejoin="round"/><path d="M15 0.500h3L27.300 10.100v5.100l-3.800-1.600v-1.300H15z" fill="#fff"/><circle cx="21.200" cy="24.500" r="8.900" fill="#2e61ba"/><circle cx="21.200" cy="24.500" r="5.900" fill="none" stroke="#fff" stroke-width="4.200"/><path d="M25.400 28.800l5.900 5.500" stroke="#fff" stroke-width="4" stroke-linecap="butt"/></svg>
<span class="t" style="top:708.00px;font-size:23.20px;line-height:23.20px;color:#fff;-webkit-text-stroke:0.20px #fff;left:95.00px;">Look up Orders and</span>
<span class="t" style="top:735.00px;font-size:23.20px;line-height:23.20px;color:#fff;letter-spacing:0.076px;-webkit-text-stroke:0.20px #fff;left:94.00px;">Invoices</span>
<svg class="b" style="left:32.90px;top:791.90px;" width="35.00" height="34.00" viewBox="0 0 35 34"><path d="M0 34V10.300l1.100 0L8.900 15.800V10.100L16.900 15.800V10.100L25.500 15.800 27.300 0h5.800L35 16.200V34z" fill="#fff"/><rect x="4.600" y="20.900" width="15.700" height="1.900" fill="#2e61ba"/><rect x="24.800" y="20.900" width="5.600" height="1.900" fill="#2e61ba"/><rect x="4.6" y="27.400" width="5.700" height="2.400" fill="#2e61ba"/><rect x="14.8" y="27.400" width="5.700" height="2.400" fill="#2e61ba"/><rect x="24.8" y="27.400" width="5.700" height="2.400" fill="#2e61ba"/></svg>
<span class="t" style="top:798.00px;font-size:23.20px;line-height:23.20px;color:#fff;letter-spacing:-0.144px;-webkit-text-stroke:0.20px #fff;left:96.00px;">Vendor Purchase Order</span>
<svg class="b" style="left:32.90px;top:868.50px;" width="33.40" height="34.60" viewBox="0 0 33.4 34.6"><path d="M0.300 2.300h7l6.200 17.800" fill="none" stroke="#fff" stroke-width="4.400" stroke-linejoin="miter"/><circle cx="16.300" cy="27.200" r="8.200" fill="#2e61ba"/><circle cx="16.300" cy="27.200" r="5.100" fill="none" stroke="#fff" stroke-width="4.200"/><path d="M12.900 8.900L24.500 4.400 27 11.200 15.200 15.600z" fill="#fff"/><path d="M15.600 16.600L30.400 11.400 33.100 18.200 18.300 23.600z" fill="#fff"/><path d="M23.400 22.600L31.700 19.600 33.100 23.200 24.800 26.400z" fill="#fff"/></svg>
<span class="t" style="top:875.00px;font-size:23.20px;line-height:23.20px;color:#fff;letter-spacing:-0.053px;-webkit-text-stroke:0.20px #fff;left:96.00px;">Vendor Return</span>
<svg class="b" style="left:29.75px;top:948.30px;" width="41.40" height="28.70" viewBox="0 0 41.4 28.7"><circle cx="30.800" cy="8.450" r="6.500" fill="#fff"/><path d="M23.500 16.800Q26 16.300 27.600 16.300Q30.800 17.800 34 16.300C38 16.300 41.200 19.500 41.200 24.500c0 1.200-.900 2.100-2.100 2.100H26.500C26.500 22 25.800 19 23.500 16.800z" fill="#fff"/><path d="M0 26.700C0 19.500 4.500 16 9.500 16Q12.700 17.600 15.900 16C21 16 25.100 19.500 25.100 26.700c0 1.100-.900 2-2 2H2c-1.100 0-2-.900-2-2z" fill="#fff" stroke="#4c8de8" stroke-width="1.800"/><path d="M0 26.700C0 19.500 4.500 16 9.500 16Q12.700 17.600 15.900 16C21 16 25.100 19.500 25.100 26.700c0 1.100-.900 2-2 2H2c-1.100 0-2-.900-2-2z" fill="#fff"/><circle cx="12.700" cy="7.350" r="8.300" fill="#4c8de8"/><circle cx="12.700" cy="7.350" r="7.400" fill="#fff"/></svg>
<span class="t" style="top:952.00px;font-size:23.20px;line-height:23.20px;color:#fff;font-weight:700;letter-spacing:-0.029px;left:89.00px;">Customers</span>
<svg class="b" style="left:30.00px;top:1025.00px;" width="33.00" height="29.00" viewBox="0 0 33 29"><path d="M1.500 0h7c.8 0 1.500.7 1.500 1.500V14l9.800-6.300c.6-.4 1.400 0 1.400.8V14l9.900-6.300c.6-.4 1.400 0 1.400.8v19c0 .8-.7 1.500-1.500 1.500h-29.500C.7 29 0 28.300 0 27.500v-26C0 .7.700 0 1.500 0z" fill="#fff"/></svg>
<span class="t" style="top:1029.00px;font-size:23.20px;line-height:23.20px;color:#fff;letter-spacing:-0.083px;-webkit-text-stroke:0.20px #fff;left:89.00px;">Vendors</span>
<svg class="b" style="left:30.90px;top:1100.00px;" width="31.00" height="31.20" viewBox="0 0 31 31.2"><path d="M5.200 15.800a5.200 5.200 0 0 1-1-10.300 6.300 6.300 0 0 1 6.100-5.200 6.400 6.400 0 0 1 5.700 2.900 4.700 4.700 0 0 1 8.300 2.600A5.100 5.100 0 0 1 26 15.800z" fill="#fff"/><text x="14.500" y="12.800" font-family="Liberation Sans" font-size="5.200" font-weight="700" fill="#dde6f7" text-anchor="middle">API</text><path d="M6.600 15.500V28.500H2.400" fill="none" stroke="#fff" stroke-width="1.600"/><path d="M3.200 22.600H6.600" fill="none" stroke="#fff" stroke-width="1.600"/><path d="M8.800 15.500V23.400H12.400V15.500" fill="none" stroke="#fff" stroke-width="1.600"/><path d="M15.200 15.500V28.500" fill="none" stroke="#fff" stroke-width="1.600"/><path d="M18 15.500V23.400H21.600V15.500" fill="none" stroke="#fff" stroke-width="1.600"/><path d="M24.300 15.500V26.800l4.300 1.700" fill="none" stroke="#fff" stroke-width="1.600"/><path d="M24.300 22.600H27.700" fill="none" stroke="#fff" stroke-width="1.600"/><circle cx="2.5" cy="28.6" r="2.500" fill="#fff"/><circle cx="3.2" cy="22.6" r="2.500" fill="#fff"/><circle cx="15.2" cy="28.6" r="2.500" fill="#fff"/><circle cx="28.5" cy="28.6" r="2.500" fill="#fff"/><circle cx="27.7" cy="22.6" r="2.500" fill="#fff"/></svg>
<span class="t" style="top:1106.00px;font-size:23.20px;line-height:23.20px;color:#fff;letter-spacing:0.311px;-webkit-text-stroke:0.20px #fff;left:87.00px;">Integrations</span>
<svg class="b" style="left:34.00px;top:1176.40px;" width="25.00" height="33.00" viewBox="0 0 25 33"><rect x="0" y="4" width="25" height="29" rx="3.2" fill="#fff"/><circle cx="12.5" cy="4.3" r="4.3" fill="#fff"/><circle cx="12.5" cy="4.4" r="1.6" fill="#2e61ba"/><rect x="6" y="8.2" width="13" height="2" rx="1" fill="#2e61ba"/></svg>
<span class="t" style="top:1182.00px;font-size:23.20px;line-height:23.20px;color:#fff;letter-spacing:-0.102px;-webkit-text-stroke:0.20px #fff;left:88.00px;">Reports</span>
<svg class="b" style="left:30.00px;top:1253.00px;" width="41.00" height="33.00" viewBox="0 0 41 33"><path d="M26.84 14.44 L26.84 18.56 L23.38 19.02 L22.27 21.71 L24.39 24.48 L21.48 27.39 L18.71 25.27 L16.02 26.38 L15.56 29.84 L11.44 29.84 L10.98 26.38 L8.29 25.27 L5.52 27.39 L2.61 24.48 L4.73 21.71 L3.62 19.02 L0.16 18.56 L0.16 14.44 L3.62 13.98 L4.73 11.29 L2.61 8.52 L5.52 5.61 L8.29 7.73 L10.98 6.62 L11.44 3.16 L15.56 3.16 L16.02 6.62 L18.71 7.73 L21.48 5.61 L24.39 8.52 L22.27 11.29 L23.38 13.98Z" fill="#ffffff" stroke="#ffffff" stroke-width="1.2" stroke-linejoin="round"/><circle cx="13.50" cy="16.50" r="4.60" fill="#2e61ba"/><path d="M40.71 5.89 L40.71 8.11 L38.64 8.31 L38.06 9.71 L39.39 11.31 L37.81 12.89 L36.21 11.56 L34.81 12.14 L34.61 14.21 L32.39 14.21 L32.19 12.14 L30.79 11.56 L29.19 12.89 L27.61 11.31 L28.94 9.71 L28.36 8.31 L26.29 8.11 L26.29 5.89 L28.36 5.69 L28.94 4.29 L27.61 2.69 L29.19 1.11 L30.79 2.44 L32.19 1.86 L32.39 -0.21 L34.61 -0.21 L34.81 1.86 L36.21 2.44 L37.81 1.11 L39.39 2.69 L38.06 4.29 L38.64 5.69Z" fill="#ffffff" stroke="#ffffff" stroke-width="1.2" stroke-linejoin="round"/><circle cx="33.50" cy="7.00" r="2.40" fill="#2e61ba"/><path d="M40.71 24.89 L40.71 27.11 L38.64 27.31 L38.06 28.71 L39.39 30.31 L37.81 31.89 L36.21 30.56 L34.81 31.14 L34.61 33.21 L32.39 33.21 L32.19 31.14 L30.79 30.56 L29.19 31.89 L27.61 30.31 L28.94 28.71 L28.36 27.31 L26.29 27.11 L26.29 24.89 L28.36 24.69 L28.94 23.29 L27.61 21.69 L29.19 20.11 L30.79 21.44 L32.19 20.86 L32.39 18.79 L34.61 18.79 L34.81 20.86 L36.21 21.44 L37.81 20.11 L39.39 21.69 L38.06 23.29 L38.64 24.69Z" fill="#ffffff" stroke="#ffffff" stroke-width="1.2" stroke-linejoin="round"/><circle cx="33.50" cy="26.00" r="2.40" fill="#2e61ba"/></svg>
<span class="t" style="top:1259.00px;font-size:23.20px;line-height:23.20px;color:#fff;letter-spacing:0.008px;-webkit-text-stroke:0.20px #fff;left:88.00px;">Company Settings</span>
<svg class="b" style="left:30.00px;top:1330.00px;" width="41.00" height="33.00" viewBox="0 0 41 33"><circle cx="14.500" cy="8.200" r="8.200" fill="#fff"/><path d="M0 30.500V27c0-4.700 3.800-8.500 8.500-8.500h12c4.700 0 8.500 3.800 8.500 8.500v3.500c0 1.400-1.100 2.500-2.500 2.500h-24C1.100 33 0 31.900 0 30.500z" fill="#fff"/><circle cx="31" cy="23.500" r="10.800" fill="#2e61ba"/><path d="M40.19 22.08 L40.19 24.92 L37.59 25.18 L36.85 26.97 L38.50 29.00 L36.50 31.00 L34.47 29.35 L32.68 30.09 L32.42 32.69 L29.58 32.69 L29.32 30.09 L27.53 29.35 L25.50 31.00 L23.50 29.00 L25.15 26.97 L24.41 25.18 L21.81 24.92 L21.81 22.08 L24.41 21.82 L25.15 20.03 L23.50 18.00 L25.50 16.00 L27.53 17.65 L29.32 16.91 L29.58 14.31 L32.42 14.31 L32.68 16.91 L34.47 17.65 L36.50 16.00 L38.50 18.00 L36.85 20.03 L37.59 21.82Z" fill="#ffffff" stroke="#ffffff" stroke-width="1.2" stroke-linejoin="round"/><circle cx="31.00" cy="23.50" r="3.10" fill="#2e61ba"/></svg>
<span class="t" style="top:1336.00px;font-size:23.20px;line-height:23.20px;color:#fff;letter-spacing:0.117px;-webkit-text-stroke:0.20px #fff;left:88.00px;">User Settings</span>
<div class="b" style="left:17.50px;top:1506.80px;width:51.00px;height:51.00px;border:3px solid #fff;border-radius:50%;"></div>
<span class="t" style="top:1524.00px;font-size:18.00px;line-height:18.00px;color:#fff;font-weight:700;letter-spacing:-0.521px;left:42.24px;width:0;display:flex;justify-content:center;">JJ</span>
<span class="t" style="top:1525.00px;font-size:20.60px;line-height:20.60px;color:#fff;letter-spacing:-0.281px;left:95.00px;">Jason J</span>
<svg class="b" style="left:320.10px;top:1513.50px;" width="38.40" height="38.40" viewBox="0 0 24 24"><path fill="#fff" stroke="#fff" stroke-width="0.35" d="M11 18h2v-2h-2v2zm1-16C6.480 2 2 6.480 2 12s4.480 10 10 10 10-4.480 10-10S17.520 2 12 2zm0 18c-4.410 0-8-3.590-8-8s3.590-8 8-8 8 3.590 8 8-3.590 8-8 8zm0-14c-2.210 0-4 1.790-4 4h2c0-1.100.900-2 2-2s2 .900 2 2c0 2-3 1.750-3 5h2c0-2.250 3-2.500 3-5 0-2.210-1.790-4-4-4z"/></svg>
</div>
</body></html>
